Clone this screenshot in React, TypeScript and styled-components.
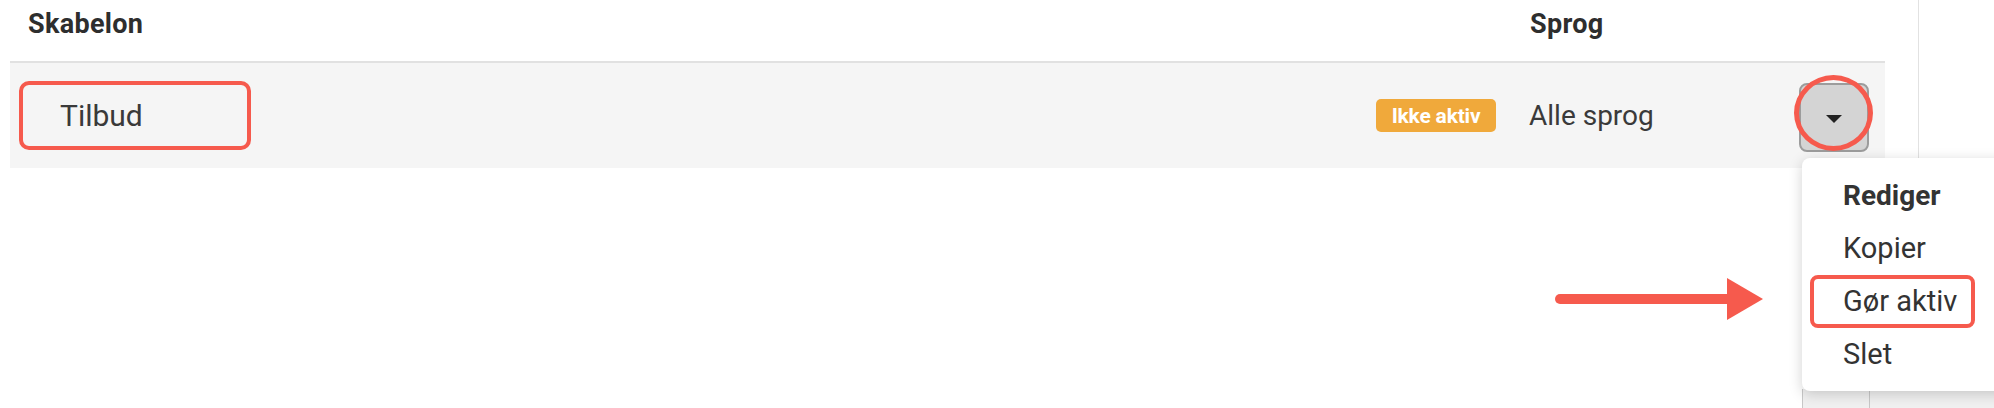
import React from 'react'
import styled, { createGlobalStyle } from 'styled-components'

const GlobalStyle = createGlobalStyle`
  * {
    box-sizing: border-box;
  }

  body {
    margin: 0;
    background: #fff;
    font-family: Roboto, 'Liberation Sans', Arial, sans-serif;
    color: #333;
  }
`

const Page = styled('div')`
  position: relative;
  display: flex;
  width: 1994px;
  height: 408px;
  overflow: hidden;
`

const Main = styled('main')`
  width: 1919px;
  height: 100%;
  padding-left: 10px;
  border-right: 1px solid #e2e2e2;
`

const Table = styled('div')`
  width: 1875px;
`

const GridRow = styled('div')`
  display: grid;
  grid-template-columns: 1fr 160px 270px 86px;
`

const HeaderRow = styled(GridRow)`
  height: 63px;
  border-bottom: 2px solid #e1e1e1;
`

const HeadCell = styled('div')<{ $inset?: number }>`
  padding-top: 8px;
  padding-left: ${({ $inset }) => $inset ?? 0}px;
  font-size: 27px;
  font-weight: 700;
  letter-spacing: 0.3px;
  color: #2e2e2e;
`

const Row = styled(GridRow)`
  height: 105px;
  background-color: #f5f5f5;
  align-items: center;
`

const NameCell = styled('div')`
  padding-left: 9px;
`

const Highlight = styled('div')`
  display: flex;
  align-items: center;
  width: 232px;
  height: 69px;
  padding-left: 37px;
  border: 4px solid #f65a4d;
  border-radius: 10px;
  font-size: 30px;
  color: #3a3a3a;
`

const StatusCell = styled('div')`
  display: flex;
  justify-content: flex-end;
  padding-right: 33px;
`

const Badge = styled('span')`
  display: flex;
  align-items: center;
  justify-content: center;
  width: 120px;
  height: 33px;
  border-radius: 5px;
  background-color: #f0a93b;
  color: #fff;
  font-size: 21px;
  font-weight: 700;
  letter-spacing: -0.2px;
`

const LangCell = styled('div')`
  font-size: 28px;
  color: #3a3a3a;
`

const ActionCell = styled('div')`
  position: relative;
  height: 100%;
  display: flex;
  align-items: center;
`

const ToggleButton = styled('button')`
  display: flex;
  align-items: center;
  justify-content: center;
  width: 70px;
  height: 69px;
  margin-top: 3px;
  padding: 0;
  border: 2px solid #9c9c9c;
  border-radius: 8px;
  background-color: #d4d4d4;
`

const Caret = styled('span')`
  width: 0;
  height: 0;
  margin-top: 4px;
  border-left: 8px solid transparent;
  border-right: 8px solid transparent;
  border-top: 8px solid #222;
`

const Ring = styled('span')`
  position: absolute;
  left: -5px;
  top: 12px;
  width: 79px;
  height: 76px;
  border: 5px solid #f65a4d;
  border-radius: 50%;
  pointer-events: none;
`

const Behind = styled('div')`
  position: absolute;
  left: 3px;
  top: 326px;
  width: 200px;
  height: 24px;
  background-color: #f0f0f0;
  border-left: 1px solid #c8c8c8;

  &::after {
    content: '';
    position: absolute;
    left: 66px;
    top: 0;
    bottom: 0;
    border-left: 1px solid #c8c8c8;
  }
`

const Menu = styled('ul')`
  position: absolute;
  left: 3px;
  top: 95px;
  width: 240px;
  margin: 0;
  padding: 11px 0 10px;
  list-style: none;
  background-color: #fff;
  border-radius: 8px;
  box-shadow: 0 3px 14px rgba(0, 0, 0, 0.18);
`

const MenuItem = styled('li')<{ $bold?: boolean; $marked?: boolean }>`
  height: 53px;
  line-height: 53px;
  padding-left: 41px;
  font-size: ${({ $bold }) => ($bold ? 28 : 29)}px;
  font-weight: ${({ $bold }) => ($bold ? 700 : 400)};
  color: #333;

  ${({ $marked }) =>
    $marked &&
    `
    width: 165px;
    margin-left: 8px;
    padding-left: 29px;
    line-height: 45px;
    border: 4px solid #f65a4d;
    border-radius: 8px;
  `}
`

const Arrow = styled('svg')`
  position: absolute;
  left: 1555px;
  top: 278px;
`

function App() {
  return (
    <>
      <GlobalStyle />
      <Page>
        <Main>
          <Table>
            <HeaderRow>
              <HeadCell $inset={18}>Skabelon</HeadCell>
              <HeadCell />
              <HeadCell $inset={1}>Sprog</HeadCell>
              <HeadCell />
            </HeaderRow>

            <Row>
              <NameCell>
                <Highlight>Tilbud</Highlight>
              </NameCell>
              <StatusCell>
                <Badge>Ikke aktiv</Badge>
              </StatusCell>
              <LangCell>Alle sprog</LangCell>
              <ActionCell>
                <ToggleButton>
                  <Caret />
                </ToggleButton>
                <Ring />
                <Behind />
                <Menu>
                  <MenuItem $bold>Rediger</MenuItem>
                  <MenuItem>Kopier</MenuItem>
                  <MenuItem $marked>Gør aktiv</MenuItem>
                  <MenuItem>Slet</MenuItem>
                </Menu>
              </ActionCell>
            </Row>
          </Table>
        </Main>

        <Arrow width="208" height="42" viewBox="0 0 208 42">
          <line x1="5" y1="21" x2="176" y2="21" stroke="#f65a4d" strokeWidth="10" strokeLinecap="round" />
          <polygon points="172,0 208,21 172,42" fill="#f65a4d" />
        </Arrow>
      </Page>
    </>
  )
}

export default App
